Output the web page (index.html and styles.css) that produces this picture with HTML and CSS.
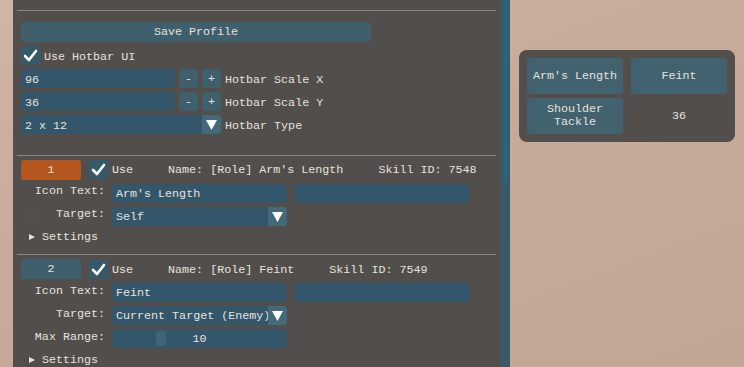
FILE: index.html
```html
<!DOCTYPE html>
<html lang="en">
<head>
  <meta charset="UTF-8">
  <title>Hotbar Settings</title>
  <link rel="stylesheet" href="styles.css">
</head>
<body>
  <!-- Settings window -->
  <div class="window">
    <div class="separator first"></div>

    <button class="btn save">Save Profile</button>

    <div class="row">
      <span class="check"><svg viewBox="0 0 19 19"><polyline points="4,10 8,14 15,5"/></svg></span>
      <span class="label">Use Hotbar UI</span>
    </div>

    <div class="row">
      <div class="field w154">96</div>
      <button class="btn small">-</button>
      <button class="btn small">+</button>
      <span class="label">Hotbar Scale X</span>
    </div>

    <div class="row">
      <div class="field w154">36</div>
      <button class="btn small">-</button>
      <button class="btn small">+</button>
      <span class="label">Hotbar Scale Y</span>
    </div>

    <div class="row">
      <div class="field combo w200">2 x 12<span class="arrow"><svg viewBox="0 0 19 19"><polygon points="4,5 15,5 9.5,15"/></svg></span></div>
      <span class="label">Hotbar Type</span>
    </div>

    <div class="separator skill-sep"></div>

    <!-- Skill 1 -->
    <div class="skill-head">
      <button class="btn slot active">1</button>
      <span class="check"><svg viewBox="0 0 19 19"><polyline points="4,10 8,14 15,5"/></svg></span>
      <span class="label">Use</span>
      <span class="label gap">Name: [Role] Arm's Length</span>
      <span class="label gap">Skill ID: 7548</span>
    </div>
    <div class="prop">
      <span class="prop-name">Icon Text:</span>
      <div class="field w175">Arm's Length</div>
      <div class="field w174"></div>
    </div>
    <div class="prop">
      <span class="prop-name">
        <svg class="ghost" viewBox="0 0 15 15"><path d="M1 4 L8 14 M4 1 L13 14 M9 1 L14 8"/></svg>
        Target:
      </span>
      <div class="field combo w175">Self<span class="arrow"><svg viewBox="0 0 19 19"><polygon points="4,5 15,5 9.5,15"/></svg></span></div>
    </div>
    <div class="tree"><span class="tri"></span>Settings</div>

    <div class="separator"></div>

    <!-- Skill 2 -->
    <div class="skill-head">
      <button class="btn slot">2</button>
      <span class="check"><svg viewBox="0 0 19 19"><polyline points="4,10 8,14 15,5"/></svg></span>
      <span class="label">Use</span>
      <span class="label gap">Name: [Role] Feint</span>
      <span class="label gap">Skill ID: 7549</span>
    </div>
    <div class="prop">
      <span class="prop-name">Icon Text:</span>
      <div class="field w175">Feint</div>
      <div class="field w174"></div>
    </div>
    <div class="prop">
      <span class="prop-name">Target:</span>
      <div class="field combo w175">Current Target (Enemy)<span class="arrow"><svg viewBox="0 0 19 19"><polygon points="4,5 15,5 9.5,15"/></svg></span></div>
    </div>
    <div class="prop">
      <span class="prop-name">Max Range:</span>
      <div class="field slider w175"><span class="grab"></span>10</div>
    </div>
    <div class="tree"><span class="tri"></span>Settings</div>
  </div>

  <!-- Scrollbar -->
  <div class="scrollbar"><div class="thumb"></div></div>

  <!-- Hotbar preview -->
  <div class="stage">
    <div class="hotbar">
      <div class="slot-btn">Arm's Length</div>
      <div class="slot-btn">Feint</div>
      <div class="slot-btn">Shoulder<br>Tackle</div>
      <div class="slot-empty">36</div>
    </div>
  </div>
</body>
</html>
```

FILE: styles.css
```css
body {
  margin: 0;
  height: 367px;
  overflow: hidden;
  display: flex;
  padding-left: 13px;
  font-family: "Liberation Mono", monospace;
  font-size: 11.7px;
  color: #e6e3de;
  background: linear-gradient(160deg, #cfb5a6 0%, #c6aa9a 45%, #c1a595 100%);
}

button {
  font: inherit;
  color: inherit;
  border: none;
  padding: 0;
}

/* Settings window */
.window {
  width: 487px;
  box-sizing: border-box;
  padding: 10px 4px 0 8px;
  background-color: #524e4b;
  display: flex;
  flex-direction: column;
  align-items: flex-start;
}

.separator {
  height: 1px;
  background-color: #8a8580;
  margin-left: -4px;
  width: 479px;
  margin-top: 10px;
}

.separator.first {
  margin-top: 0;
}

.separator.skill-sep {
  margin-top: 21px;
}

.btn {
  background-color: #3f5f6c;
  border-radius: 3px;
  height: 19px;
  line-height: 20px;
  text-align: center;
}

.btn.save {
  width: 350px;
  height: 20px;
  line-height: 21px;
  margin-top: 11px;
}

.btn.small {
  width: 19px;
}

.row {
  display: flex;
  align-items: center;
  gap: 4px;
  margin-top: 4px;
  height: 19px;
}

.label {
  white-space: pre;
}

.row .label {
  padding-top: 4px;
}

.check {
  width: 19px;
  height: 19px;
  background-color: #35596a;
  border-radius: 3px;
}

.check svg {
  display: block;
  width: 19px;
  height: 19px;
}

.check polyline {
  fill: none;
  stroke: #ffffff;
  stroke-width: 2.6;
  stroke-linecap: round;
  stroke-linejoin: round;
}

.field {
  position: relative;
  height: 19px;
  line-height: 21px;
  padding-left: 4px;
  box-sizing: border-box;
  background-color: #33566a;
  border-radius: 3px;
  white-space: pre;
  overflow: hidden;
}

.row .field {
  line-height: 22px;
}

.w154 { width: 154px; }
.w200 { width: 200px; }
.w175 { width: 175px; }
.w174 { width: 174px; }

.combo .arrow {
  position: absolute;
  right: 0;
  top: 0;
  width: 19px;
  height: 19px;
  background-color: #446979;
  border-radius: 0 3px 3px 0;
}

.arrow svg {
  display: block;
  width: 19px;
  height: 19px;
}

.arrow polygon {
  fill: #ffffff;
}

.slider {
  text-align: center;
  padding-left: 0;
}

.slider .grab {
  position: absolute;
  left: 44px;
  top: 2px;
  width: 10px;
  height: 15px;
  background-color: #3d6577;
  border-radius: 2px;
}

/* Skill blocks */
.skill-head {
  display: flex;
  align-items: center;
  margin-top: 4px;
  height: 20px;
}

.skill-head .label {
  padding-top: 1px;
}

.btn.slot {
  width: 60px;
  height: 20px;
  line-height: 21px;
  margin-right: 8px;
}

.btn.slot.active {
  background-color: #b5561f;
}

.skill-head .check {
  margin-right: 4px;
}

.skill-head .gap {
  margin-left: 35px;
}

.prop {
  display: flex;
  align-items: center;
  margin-top: 4px;
  height: 19px;
  gap: 8px;
}

.prop-name {
  position: relative;
  width: 84px;
  margin-right: -1px;
  padding-bottom: 4px;
  text-align: right;
  white-space: nowrap;
}

.ghost {
  position: absolute;
  left: 2px;
  top: 1px;
  width: 15px;
  height: 15px;
}

.ghost path {
  fill: none;
  stroke: #57524f;
  stroke-width: 1.4;
}

.tree {
  display: flex;
  align-items: center;
  margin-top: 4px;
  height: 15px;
  padding-left: 8px;
}

.tri {
  width: 0;
  height: 0;
  border-top: 3.5px solid transparent;
  border-bottom: 3.5px solid transparent;
  border-left: 6px solid #e6e3de;
  margin-right: 7px;
}

/* Scrollbar */
.scrollbar {
  width: 10px;
  background-color: #3a5866;
  flex-shrink: 0;
}

.thumb {
  width: 5px;
  height: 183px;
  margin-left: 3px;
  background-color: #2e6278;
  border-radius: 0 0 2px 2px;
}

/* Hotbar preview */
.stage {
  flex: 1;
  padding: 50px 0 0 9px;
}

.hotbar {
  display: grid;
  grid-template-columns: 96px 96px;
  grid-auto-rows: 36px;
  column-gap: 8px;
  row-gap: 4px;
  width: 200px;
  padding: 8px;
  background-color: #524e4b;
  border-radius: 8px;
}

.slot-btn,
.slot-empty {
  display: flex;
  align-items: center;
  justify-content: center;
  text-align: center;
  line-height: 13px;
  border-radius: 3px;
}

.slot-btn {
  background-color: #41626e;
}
```
